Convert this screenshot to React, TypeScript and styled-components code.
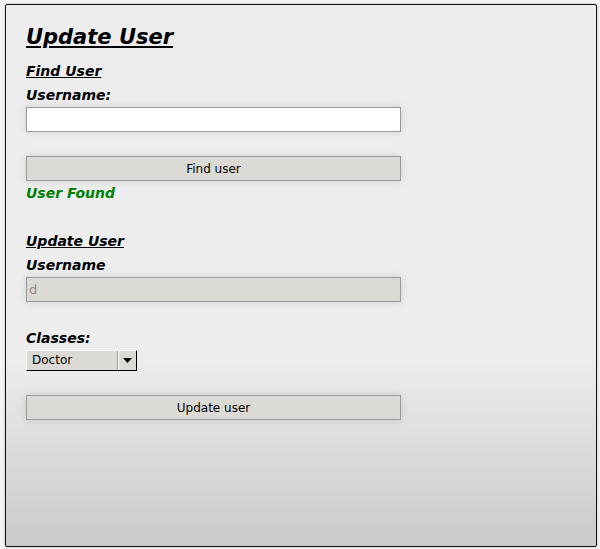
import React from "react";
import styled, { createGlobalStyle } from "styled-components";

const GlobalStyle = createGlobalStyle`
  html, body {
    margin: 0;
    padding: 0;
    background: #f4f4f4;
  }
  body {
    padding: 4px 3px 3px 5px;
    font-family: "DejaVu Sans", sans-serif;
  }
`;

const Panel = styled.div`
  box-sizing: border-box;
  height: 543px;
  border: 1px solid #111;
  border-radius: 2px;
  background: linear-gradient(to bottom, #ededed 0%, #ededed 65%, #cacaca 100%);
  box-shadow: 0 0 3px rgba(0, 0, 0, 0.25);
  padding: 18px 20px;
  display: flex;
  flex-direction: column;
`;

const Title = styled.h1`
  margin: 0 0 8px;
  font-size: 21px;
  line-height: 28px;
  font-weight: bold;
  font-style: italic;
  text-decoration: underline;
  color: #000;
`;

const Section = styled.h2`
  margin: 0;
  font-size: 14px;
  line-height: 24px;
  font-weight: bold;
  font-style: italic;
  text-decoration: underline;
  color: #000;
`;

const Label = styled.div<{ $color?: string }>`
  font-size: 14px;
  line-height: 24px;
  font-weight: bold;
  font-style: italic;
  color: ${(p) => p.$color || "#000"};
`;

const Field = styled.input<{ $disabled?: boolean }>`
  box-sizing: border-box;
  width: 375px;
  height: 25px;
  margin: 0;
  padding: 0 2px;
  border: 1px solid #999;
  background: ${(p) => (p.$disabled ? "#dcdad5" : "#fff")};
  color: #8a8a8a;
  font-family: "DejaVu Sans", sans-serif;
  font-size: 13px;
  box-shadow: 0 0 8px rgba(0, 0, 0, 0.12);
  outline: none;
`;

const Button = styled.button`
  box-sizing: border-box;
  width: 375px;
  height: 25px;
  margin: 0;
  padding: 0;
  border: 1px solid #999;
  background: #dcdad5;
  color: #000;
  font-family: "DejaVu Sans", sans-serif;
  font-size: 12px;
  box-shadow: 0 0 8px rgba(0, 0, 0, 0.12);
`;

const Spacer = styled.div<{ $h: number }>`
  height: ${(p) => p.$h}px;
  flex: none;
`;

const Select = styled.div`
  box-sizing: border-box;
  width: 111px;
  height: 21px;
  display: flex;
  align-items: stretch;
  background: #dcdad5;
  border-top: 1px solid #fff;
  border-left: 1px solid #fff;
  border-right: 1px solid #000;
  border-bottom: 1px solid #000;
  font-family: "DejaVu Sans", sans-serif;
  font-size: 12px;
`;

const SelectValue = styled.div`
  flex: 1;
  padding-left: 5px;
  line-height: 19px;
  color: #000;
`;

const SelectArrow = styled.div`
  width: 17px;
  display: flex;
  align-items: center;
  justify-content: center;
  border-left: 1px solid #fff;
  box-shadow: -1px 0 0 #9a9a9a;
`;

export default function App() {
  return (
    <>
      <GlobalStyle />
      <Panel>
        <Title>Update User</Title>
        <Section>Find User</Section>
        <Label>Username:</Label>
        <Field />
        <Spacer $h={24} />
        <Button>Find user</Button>
        <Label $color="#008000">User Found</Label>
        <Spacer $h={24} />
        <Section>Update User</Section>
        <Label>Username</Label>
        <Field $disabled value="d" readOnly />
        <Spacer $h={24} />
        <Label>Classes:</Label>
        <Select>
          <SelectValue>Doctor</SelectValue>
          <SelectArrow>
            <svg width="9" height="5" viewBox="0 0 9 5">
              <path d="M0 0h9L4.5 5z" fill="#000" />
            </svg>
          </SelectArrow>
        </Select>
        <Spacer $h={24} />
        <Button>Update user</Button>
      </Panel>
    </>
  );
}
